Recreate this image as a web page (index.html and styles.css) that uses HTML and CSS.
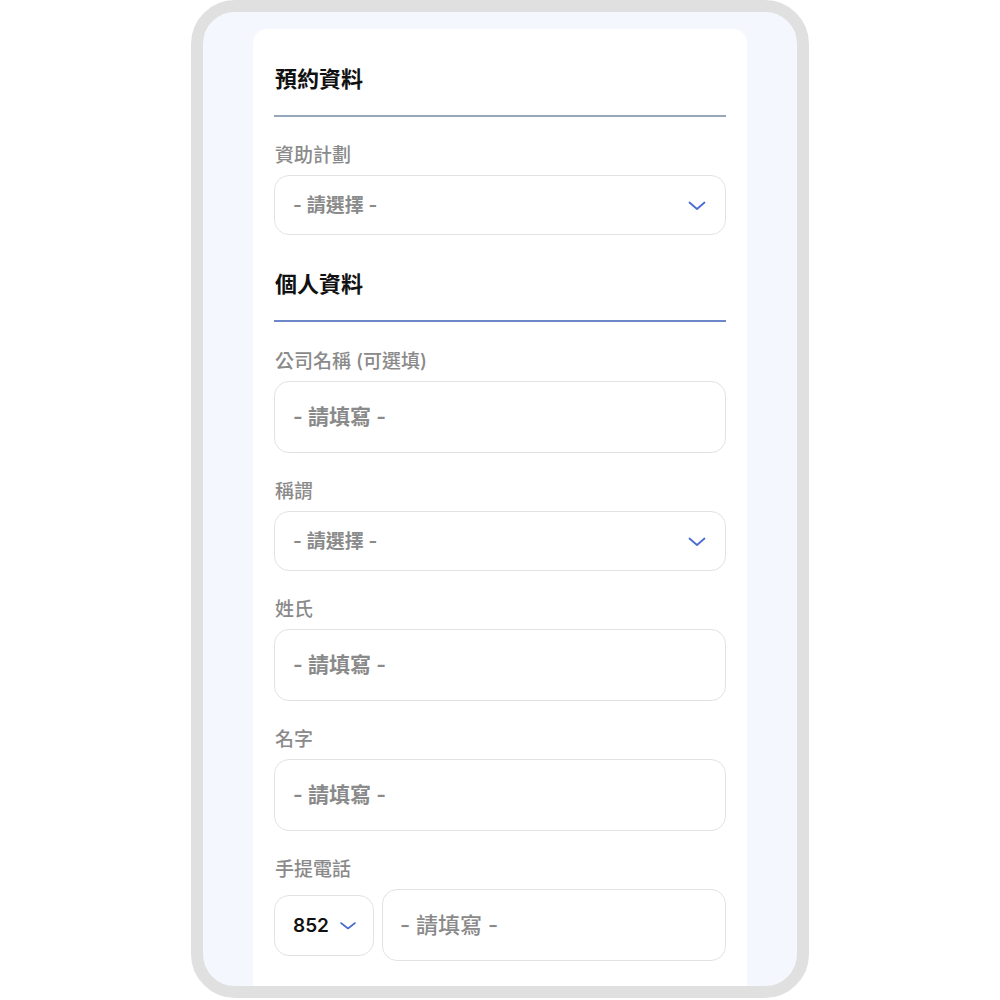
FILE: index.html
```html
<!DOCTYPE html>
<html lang="zh-Hant">
<head>
<meta charset="utf-8">
<title>預約資料</title>
<link rel="stylesheet" href="styles.css">
</head>
<body>
<div class="frame">
  <div class="screen">
    <div class="card">
      <h2 class="section-title">預約資料</h2>
      <div class="divider divider-gray"></div>
      <div class="field">
        <div class="label">資助計劃</div>
        <div class="select">
          <span class="select-text">- 請選擇 -</span>
          <svg class="chevron" width="18" height="10" viewBox="0 0 18 10"><path d="M1.5 1.5 L9 8 L16.5 1.5" fill="none" stroke="#4a6cd0" stroke-width="1.8" stroke-linecap="round" stroke-linejoin="round"/></svg>
        </div>
      </div>

      <h2 class="section-title section-gap">個人資料</h2>
      <div class="divider divider-blue"></div>
      <div class="field">
        <div class="label">公司名稱 (可選填)</div>
        <div class="input"><span class="input-text">- 請填寫 -</span></div>
      </div>
      <div class="field">
        <div class="label">稱謂</div>
        <div class="select">
          <span class="select-text">- 請選擇 -</span>
          <svg class="chevron" width="18" height="10" viewBox="0 0 18 10"><path d="M1.5 1.5 L9 8 L16.5 1.5" fill="none" stroke="#4a6cd0" stroke-width="1.8" stroke-linecap="round" stroke-linejoin="round"/></svg>
        </div>
      </div>
      <div class="field">
        <div class="label">姓氏</div>
        <div class="input"><span class="input-text">- 請填寫 -</span></div>
      </div>
      <div class="field">
        <div class="label">名字</div>
        <div class="input"><span class="input-text">- 請填寫 -</span></div>
      </div>
      <div class="field">
        <div class="label">手提電話</div>
        <div class="phone-row">
          <div class="code">
            <span class="code-text">852</span>
            <svg class="chevron-small" width="18" height="10" viewBox="0 0 18 10"><path d="M2 2 L9 7.5 L16 2" fill="none" stroke="#4a6cd0" stroke-width="1.6" stroke-linecap="round" stroke-linejoin="round"/></svg>
          </div>
          <div class="input phone-input"><span class="input-text light">- 請填寫 -</span></div>
        </div>
      </div>
    </div>
  </div>
</div>
</body>
</html>
```

FILE: styles.css
```css
* { box-sizing: border-box; }
html, body {
  margin: 0;
  padding: 0;
  background: #ffffff;
  height: 1000px;
  overflow: hidden;
}
body {
  font-family: Inter, "Noto Sans CJK TC", "Noto Sans", sans-serif;
  color: #111;
}
.frame {
  width: 618px;
  height: 998px;
  margin: 0 auto;
  border: 12px solid #e0e0e0;
  border-radius: 44px;
  overflow: hidden;
  background: #f4f7fd;
}
.screen {
  height: 100%;
  padding: 17px 50px 0;
  display: flex;
  flex-direction: column;
}
.card {
  flex: 1;
  background: #ffffff;
  border-radius: 14px 14px 0 0;
  padding: 35px 21px 0 21px;
}
.section-title {
  margin: 0;
  font-size: 22px;
  line-height: 30px;
  font-weight: 700;
  color: #111;
  padding-left: 1px;
}
.section-gap { margin-top: 34px; }
.divider {
  height: 2px;
  margin-top: 21px;
  margin-bottom: 27px;
}
.divider-gray { background: #97a7ba; }
.divider-blue { background: #6d87c8; margin-bottom: 28px; }
.field + .field { margin-top: 27px; }
.label {
  font-size: 19px;
  line-height: 24px;
  font-weight: 500;
  color: #8a8a8a;
  margin-bottom: 7px;
  padding-left: 1px;
}
.select {
  height: 60px;
  border: 1px solid #e2e2e2;
  border-radius: 15px;
  display: flex;
  align-items: center;
  justify-content: space-between;
  padding: 0 19px 0 18px;
}
.select-text {
  font-size: 19px;
  font-weight: 600;
  color: #8a8a8a;
  margin-bottom: 4px;
}
.chevron { display: block; margin-top: 1px; }
.input {
  height: 72px;
  border: 1px solid #e2e2e2;
  border-radius: 15px;
  display: flex;
  align-items: center;
  padding: 0 18px;
}
.input-text {
  font-size: 21px;
  font-weight: 600;
  color: #8a8a8a;
  margin-bottom: 5px;
}
.input-text.light { font-weight: 500; font-size: 22px; }
.phone-row {
  display: flex;
  align-items: center;
  gap: 8px;
}
.code {
  width: 100px;
  height: 61px;
  flex: none;
  border: 1px solid #e2e2e2;
  border-radius: 15px;
  display: flex;
  align-items: center;
  gap: 10px;
  padding-left: 18px;
}
.code-text {
  font-size: 19px;
  font-weight: 600;
  color: #111;
}
.chevron-small { display: block; margin-top: 2px; }
.phone-input {
  flex: 1;
  padding-left: 17px;
}
```
